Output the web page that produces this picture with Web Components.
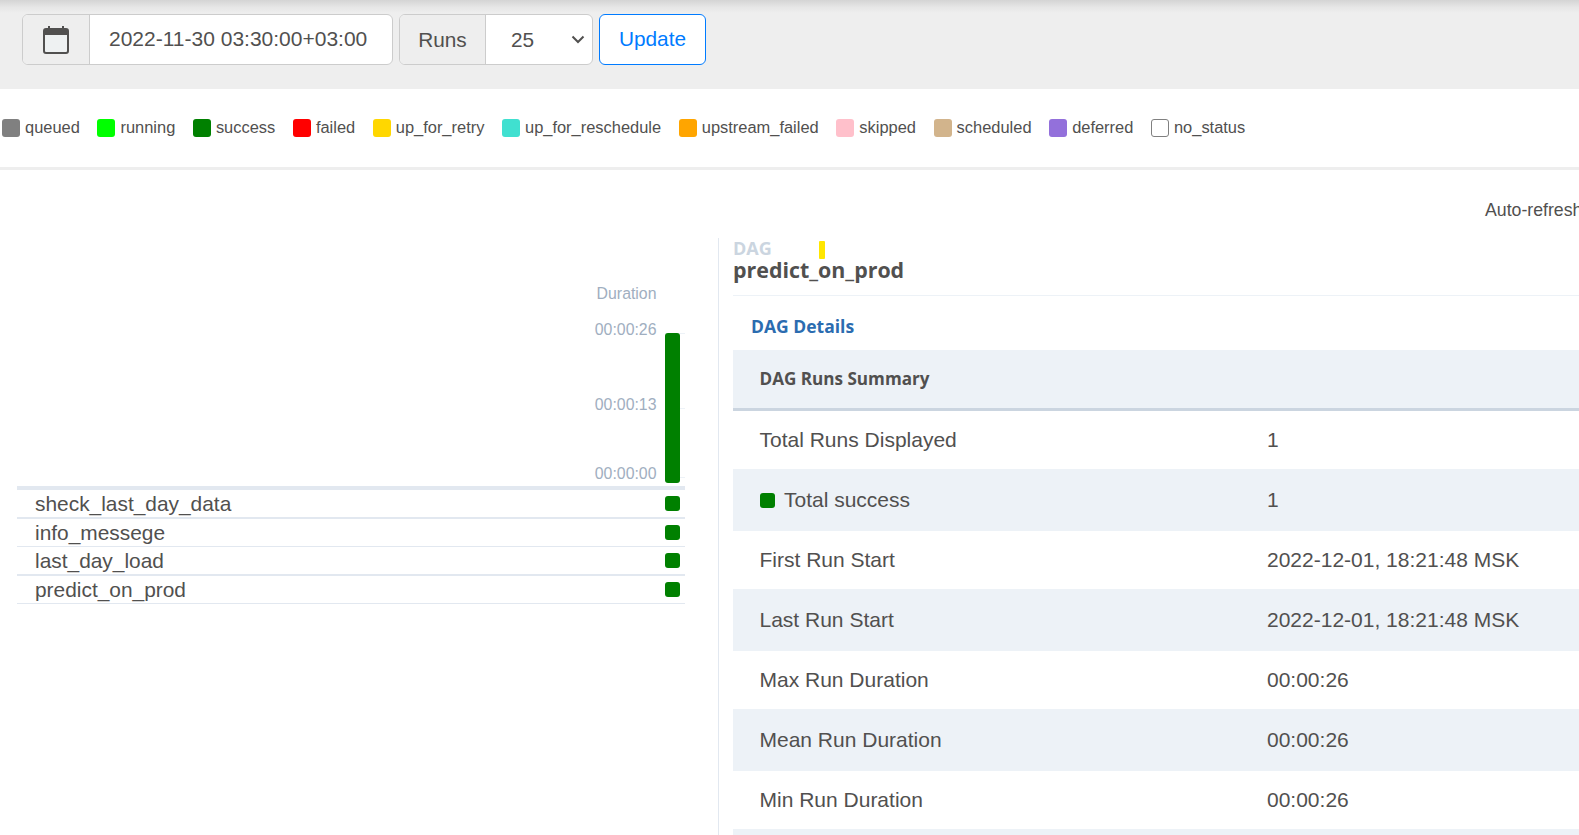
<!DOCTYPE html>
<html><head><meta charset="utf-8">
<style>
html,body{margin:0;padding:0;height:835px;overflow:hidden;background:#fff;color:#51504f;font-family:"Liberation Sans",Arial,sans-serif;}
grid-page{display:block;width:1579px;height:835px;overflow:hidden}
</style></head>
<body>
<grid-page>
  <top-bar></top-bar>
  <state-legend></state-legend>
  <refresh-row>Auto-refresh</refresh-row>
  <split-view>
    <task-panel slot="left"></task-panel>
    <details-panel slot="right"></details-panel>
  </split-view>
</grid-page>
<script>
function def(name, css, html){
  customElements.define(name, class extends HTMLElement{
    connectedCallback(){
      if(this.shadowRoot) return;
      const r=this.attachShadow({mode:'open'});
      r.innerHTML='<style>'+css+'</style>'+(typeof html==='function'?html(this):html);
    }
  });
}
def('top-bar',`
:host{display:flex;height:75px;padding:14px 0 0 21.5px;gap:6px;align-items:flex-start;box-sizing:content-box;background:linear-gradient(#d4d4d4,#e6e6e6 7px,#eee 13px,#eee);font-size:20.8px;color:#51504f}
.g{display:flex;height:51px;box-sizing:border-box;border:1px solid #ccc;border-radius:6px;overflow:hidden;background:#fff}
.a{display:flex;align-items:center;justify-content:center;background:#eee;border-right:1px solid #ccc}
.i{display:flex;align-items:center}
.btn{display:flex;align-items:center;justify-content:center;box-sizing:border-box;width:107px;height:51px;padding-bottom:2px;border:1px solid #007bff;border-radius:6px;background:#fff;color:#007bff}
svg{display:block}
`,`
<div class="g" style="width:371.5px">
  <div class="a" style="width:66.5px"><svg width="26" height="28" viewBox="0 0 26 28"><path d="M5 0h2v4H5zM19 0h2v4h-2z" fill="#51504f"/><rect x="1" y="3" width="24" height="24" rx="2" fill="#eef1f2" stroke="#51504f" stroke-width="2"/><rect x="1" y="3" width="24" height="6" fill="#51504f"/></svg></div>
  <div class="i" style="padding:0 0 2px 19px;font-size:21px">2022-11-30 03:30:00+03:00</div>
</div>
<div class="g" style="width:194px">
  <div class="a" style="width:85px">Runs</div>
  <div class="i" style="padding-left:25px;flex:1;gap:37px">25<svg width="14" height="9" viewBox="0 0 14 9"><path d="M1.5 1.5 7 7l5.5-5.5" fill="none" stroke="#51504f" stroke-width="2"/></svg></div>
</div>
<div class="btn">Update</div>
`);
def('state-item',`
:host{display:inline-flex;align-items:center;gap:5px;font-size:16.45px;color:#51504f}
i{display:block;box-sizing:border-box;width:18px;height:18px;border-radius:3px;background:var(--c);border:1px solid var(--b,transparent)}
span{padding-bottom:2px}
`,`<i></i><span><slot></slot></span>`);
def('state-legend',`
:host{display:flex;box-sizing:content-box;height:78px;padding-left:2px;border-bottom:3px solid #eee;align-items:center;gap:17.6px}
`,(h)=>{const s=[['queued','gray'],['running','lime'],['success','green'],['failed','red'],['up_for_retry','gold'],['up_for_reschedule','turquoise'],['upstream_failed','orange'],['skipped','pink'],['scheduled','tan'],['deferred','mediumpurple'],['no_status','#fff']];
return s.map(([t,c])=>`<state-item style="--c:${c}${t=='no_status'?';--b:#808080':''}">${t}</state-item>`).join('')});
def('refresh-row',`:host{display:block;height:68px;padding:30px 0 0 1485px;box-sizing:border-box;font-size:17.7px;line-height:20px;white-space:nowrap;color:#51504f}`,`<slot></slot>`);
def('split-view',`
:host{display:flex;height:597px}
.l{width:718px;flex:none;border-right:1px solid #e2e8f0}
.r{flex:1;min-width:0;padding-left:14px}
`,`<div class="l"><slot name="left"></slot></div><div class="r"><slot name="right"></slot></div>`);
def('task-panel',`
:host{display:block;padding-left:17px;width:668px}
.chart{display:flex;justify-content:flex-end;height:248px;box-sizing:border-box;padding-top:47px}
.axis{width:80px;font-size:15.85px;line-height:18px;color:#a0aec0;text-align:right;margin-right:8.5px;padding-right:0}
.axis div+div{margin-top:18px}
.axis .b{margin-top:57px!important}.axis .c{margin-top:51px!important}
.plot{width:20px;height:153px;align-self:flex-end;background:
 linear-gradient(#edf2f7,#edf2f7) 0 0/100% 1px no-repeat,
 linear-gradient(#edf2f7,#edf2f7) 0 75px/100% 1px no-repeat,
 linear-gradient(#edf2f7,#edf2f7) 0 144px/100% 1px no-repeat}
.bar{width:15px;height:150px;background:green;border-radius:3px}
.list{border-top:4px solid #e2e8f0}
`,`
<div class="chart"><div class="axis"><div>Duration</div><div>00:00:26</div><div class="b">00:00:13</div><div class="c">00:00:00</div></div><div class="plot"><div class="bar"></div></div></div>
<div class="list">
<task-row line="2">sheck_last_day_data</task-row>
<task-row line="1">info_messege</task-row>
<task-row line="2">last_day_load</task-row>
<task-row line="1">predict_on_prod</task-row>
</div>`);
def('task-row',`
:host{display:flex;align-items:center;justify-content:space-between;height:27px;padding:0 5px 0 18px;font-size:20.9px;border-bottom:1px solid #e2e8f0;white-space:nowrap}
:host([line="2"]){border-bottom-width:2px}
i{display:block;width:15px;height:15px;border-radius:3px;background:green}
`,`<span><slot></slot></span><i></i>`);
def('details-panel',`
:host{display:block}
.h{height:57px;box-sizing:content-box;border-bottom:1px solid #edf2f7;font-family:"Open Sans","Noto Sans",sans-serif;font-weight:700}
.t{display:flex;height:21px;font-size:18px;line-height:21px;color:#cbd5e0;align-items:flex-start}
.m{display:block;width:6px;height:18px;margin:3px 0 0 47px;background:#ffe600;border-radius:1px}
.n{font-size:21.4px;line-height:22px;color:#51504f}
.d{height:54px;box-sizing:border-box;padding:19px 0 0 18px;font:700 17.5px/23px "Open Sans","Noto Sans",sans-serif;color:#2b6cb0}
`,`
<div class="h"><div class="t">DAG<i class="m"></i></div><div class="n">predict_on_prod</div></div>
<div class="d">DAG Details</div>
<summary-head>DAG Runs Summary</summary-head>
<summary-row h="58" k="Total Runs Displayed" v="1"></summary-row>
<summary-row h="62" g badge k="Total success" v="1"></summary-row>
<summary-row h="58" k="First Run Start" v="2022-12-01, 18:21:48 MSK"></summary-row>
<summary-row h="62" g k="Last Run Start" v="2022-12-01, 18:21:48 MSK"></summary-row>
<summary-row h="58" k="Max Run Duration" v="00:00:26"></summary-row>
<summary-row h="62" g k="Mean Run Duration" v="00:00:26"></summary-row>
<summary-row h="58" k="Min Run Duration" v="00:00:26"></summary-row>
<summary-row h="60" g k="" v=""></summary-row>
`);
def('summary-head',`
:host{display:flex;align-items:center;box-sizing:border-box;height:61px;padding:0 0 2px 26.5px;background:#edf2f7;border-bottom:3px solid #cbd5e0;font:700 17.1px "Open Sans","Noto Sans",sans-serif;color:#51504f}
`,`<slot></slot>`);
def('summary-row',`
:host{display:grid;grid-template-columns:534px 1fr;align-items:center;font-size:21px;color:#51504f;background:#fff;white-space:nowrap}
:host([g]){background:#edf2f7}
.k{display:flex;align-items:center;padding-left:26.5px;gap:9.5px}
i{display:block;width:15px;height:15px;border-radius:3px;background:green}
`,(h)=>`<style>:host{height:${h.getAttribute('h')}px}</style><div class="k">${h.hasAttribute('badge')?'<i></i>':''}<span>${h.getAttribute('k')}</span></div><div>${h.getAttribute('v')}</div>`);
</script>
</body></html>
